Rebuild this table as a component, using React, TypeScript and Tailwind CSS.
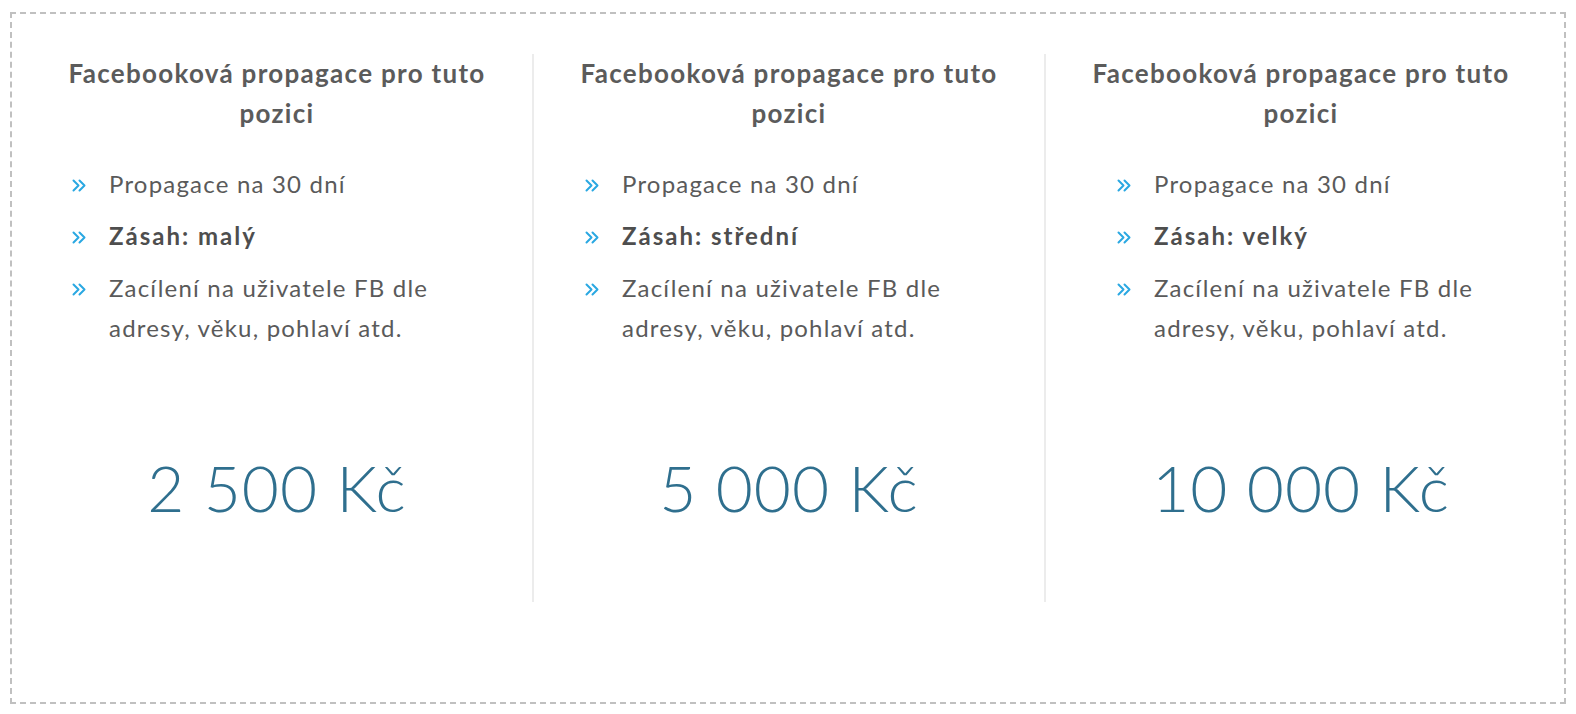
import React from 'react';

// --- Data ---
interface Plan {
  reach: string;
  price: string;
  listOffset: string;
}

const plans: Plan[] = [
  { reach: 'malý', price: '2 500 Kč', listOffset: 'ml-[50px]' },
  { reach: 'střední', price: '5 000 Kč', listOffset: 'ml-[51px]' },
  { reach: 'velký', price: '10 000 Kč', listOffset: 'ml-[71px]' },
];

// --- Double chevron bullet ---
const Bullet = () => (
  <svg width="14" height="13" viewBox="0 0 14 13" fill="none" className="shrink-0 mt-[15px]">
    <path d="M1.5 1.5 L6.5 6.5 L1.5 11.5" stroke="#2aa8e2" strokeWidth="2" strokeLinecap="round" strokeLinejoin="round" />
    <path d="M7.5 1.5 L12.5 6.5 L7.5 11.5" stroke="#2aa8e2" strokeWidth="2" strokeLinecap="round" strokeLinejoin="round" />
  </svg>
);

const Item = ({ children }: { children: React.ReactNode }) => (
  <li className="flex gap-[23px]">
    <Bullet />
    <span className="w-[370px]">{children}</span>
  </li>
);

const PlanColumn = ({ plan, index }: { plan: Plan; index: number }) => (
  <div className={index > 0 ? 'h-[548px] border-l-2 border-[#ececec]' : 'h-[548px] border-l-2 border-transparent'}>
    <h3 className="mx-auto w-[460px] -mt-[1px] text-center text-[26px] leading-[40px] font-bold tracking-[1.3px] text-[#5b5b5b]">
      Facebooková propagace pro tuto pozici
    </h3>
    <ul className={`mt-[31px] flex flex-col gap-3 text-[24px] leading-[40px] tracking-[1.2px] text-[#5a5a5a] ${plan.listOffset}`}>
      <Item>Propagace na 30 dní</Item>
      <Item>
        <b className="font-bold text-[#4e4e4e] tracking-[2px]">Zásah: {plan.reach}</b>
      </Item>
      <Item>Zacílení na uživatele FB dle adresy, věku, pohlaví atd.</Item>
    </ul>
    <div className="mt-[108px] text-center text-[64px] leading-[64px] font-light tracking-[1px] text-[#2f6f8e]">
      {plan.price}
    </div>
  </div>
);

export default function App() {
  return (
    <div className="h-[714px] w-[1576px] bg-white px-[10px] pt-[12px] pb-[10px] font-['Lato','Open_Sans',sans-serif]">
      <div className="h-full border-2 border-dashed border-[#c0c0c0] px-[8px] pt-[40px]">
        <div className="grid grid-cols-3">
          {plans.map((plan, i) => (
            <PlanColumn key={i} plan={plan} index={i} />
          ))}
        </div>
      </div>
    </div>
  );
}
